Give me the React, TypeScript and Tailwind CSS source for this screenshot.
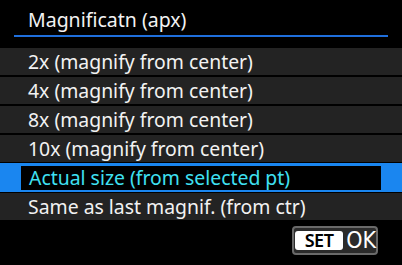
import React from 'react'

const items = [
  '2x (magnify from center)',
  '4x (magnify from center)',
  '8x (magnify from center)',
  '10x (magnify from center)',
  'Actual size (from selected pt)',
  'Same as last magnif. (from ctr)',
]

const selected = 4

export default function App() {
  return (
    <div
      className="w-[402px] h-[265px] bg-black text-white overflow-hidden flex flex-col"
      style={{ fontFamily: '"Noto Sans", "Open Sans", sans-serif' }}
    >
      {/* title */}
      <div className="px-[14px] pt-[6px]">
        <div className="pl-[14px] h-[28px] text-[19.5px] leading-[28px] text-[#f2f2f2]">Magnificatn (apx)</div>
        <div className="h-[2px] mt-[1px] bg-[#1f6fdc]" />
      </div>

      {/* options */}
      <div className="mt-[11px] flex flex-col gap-[2px]">
        {items.map((item, i) =>
          i === selected ? (
            <div key={item} className="h-[29px] -my-[1px] bg-[#1a86f0] pt-[3px] pb-[2px] px-[21px]">
              <div className="h-full bg-black pl-[8px] text-[19.4px] leading-[23px] text-[#3fe0f2]">{item}</div>
            </div>
          ) : (
            <div key={item} className="h-[27px] bg-[#232323] pl-[28px] text-[19.4px] leading-[28px] text-[#f2f2f2]">
              {item}
            </div>
          )
        )}
      </div>

      {/* SET OK */}
      <div className="flex justify-end pr-[24px] mt-[6px]">
        <div className="w-[86px] h-[29px] rounded-[4px] border-2 border-[#6a6a6a] bg-[#2b2b2b] flex items-center pl-[1px] gap-[3px]">
          <div className="w-[51px] h-[19px] rounded-[3px] bg-white text-black text-[18px] font-semibold leading-[19px] text-center tracking-[-0.5px]">
            SET
          </div>
          <div
            className="text-[23px] leading-[25px] text-white"
            style={{ fontFamily: '"DejaVu Sans Condensed", "Noto Sans", sans-serif' }}
          >
            OK
          </div>
        </div>
      </div>
    </div>
  )
}
